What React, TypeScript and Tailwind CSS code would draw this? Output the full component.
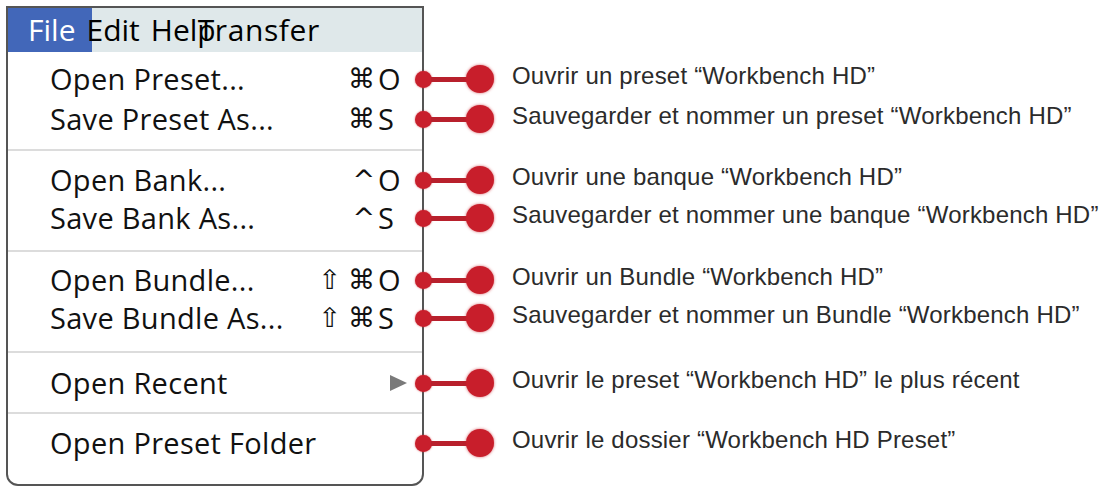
import React from "react";

type Row = { label: string; mod?: string[]; key?: string; arrow?: boolean; note: string };
type Group = { pt: string; pb: string; rowH: string; rows: Row[] };

const groups: Group[] = [
  {
    pt: "pt-[7px]",
    pb: "pb-[10px]",
    rowH: "h-[40px]",
    rows: [
      { label: "Open Preset...", mod: ["⌘"], key: "O", note: "Ouvrir un preset “Workbench HD”" },
      { label: "Save Preset As...", mod: ["⌘"], key: "S", note: "Sauvegarder et nommer un preset “Workbench HD”" },
    ],
  },
  {
    pt: "pt-[10px]",
    pb: "pb-[13px]",
    rowH: "h-[38px]",
    rows: [
      { label: "Open Bank...", mod: ["^"], key: "O", note: "Ouvrir une banque “Workbench HD”" },
      { label: "Save Bank As...", mod: ["^"], key: "S", note: "Sauvegarder et nommer une banque “Workbench HD”" },
    ],
  },
  {
    pt: "pt-[9px]",
    pb: "pb-[14px]",
    rowH: "h-[38px]",
    rows: [
      { label: "Open Bundle...", mod: ["⇧", "⌘"], key: "O", note: "Ouvrir un Bundle “Workbench HD”" },
      { label: "Save Bundle As...", mod: ["⇧", "⌘"], key: "S", note: "Sauvegarder et nommer un Bundle “Workbench HD”" },
    ],
  },
  {
    pt: "pt-[10px]",
    pb: "pb-[9px]",
    rowH: "h-[40px]",
    rows: [{ label: "Open Recent", arrow: true, note: "Ouvrir le preset “Workbench HD” le plus récent" }],
  },
  {
    pt: "pt-[9px]",
    pb: "pb-[0px]",
    rowH: "h-[40px]",
    rows: [{ label: "Open Preset Folder", note: "Ouvrir le dossier “Workbench HD Preset”" }],
  },
];

const menuFont = { fontFamily: '"Open Sans", "DejaVu Sans", sans-serif' };
const symFont = { fontFamily: '"DejaVu Sans", sans-serif' };

function Separator() {
  return <div className="h-[2px] bg-[#dcdcdc]" />;
}

function Menu() {
  return (
    <div
      className="w-[418px] h-[480px] border-2 border-[#555] rounded-b-[12px] bg-white flex flex-col text-[#111] shrink-0"
      style={menuFont}
    >
      <div className="h-[44px] bg-[#dfe8ea] flex items-center text-[30px] leading-none text-black whitespace-nowrap">
        <div className="h-full flex items-center bg-[#4267b9] text-white pl-[20px] pr-[17px]">File</div>
        <span className="-ml-[6px]">Edit</span>
        <span className="ml-[11px]">Help</span>
        <span className="-ml-[18px] tracking-[0.6px]">Transfer</span>
      </div>
      {groups.map((g, gi) => (
        <React.Fragment key={gi}>
          {gi > 0 && <Separator />}
          <div className={`${g.pt} ${g.pb} flex flex-col`}>
            {g.rows.map((r, ri) => (
              <div key={ri} className={`${g.rowH} flex items-center text-[29px] whitespace-nowrap`}>
                <span className="pl-[42px] flex-1 tracking-[0.3px]">{r.label}</span>
                {r.key && (
                  <span className="flex items-center pr-[16px]">
                    <span className="flex items-center justify-end gap-[7px] mr-[3px] text-[27px]" style={symFont}>
                      {r.mod!.map((m, mi) => (
                        <span key={mi}>{m}</span>
                      ))}
                    </span>
                    <span className="w-[28px] text-left">{r.key}</span>
                  </span>
                )}
                {r.arrow && (
                  <span className="pr-[15px] flex items-center">
                    <svg width="17" height="16" viewBox="0 0 17 16">
                      <polygon points="0,0 17,8 0,16" fill="#7a7a7a" />
                    </svg>
                  </span>
                )}
              </div>
            ))}
          </div>
        </React.Fragment>
      ))}
    </div>
  );
}

function Note({ text, h }: { text: string; h: string }) {
  return (
    <div className={`${h} flex items-center`}>
      <div className="w-[17px] h-[17px] rounded-full bg-[#c81f2c] shadow-[0_0_2px_rgba(200,30,40,0.7)] shrink-0" />
      <div className="w-[36px] h-[5px] bg-[#b8202c] -mx-[1px] shrink-0" />
      <div className="w-[28px] h-[28px] rounded-full bg-[#c81e2b] shadow-[0_0_3px_rgba(200,30,40,0.7)] shrink-0" />
      <span
        className="ml-[18px] pb-[7px] text-[24px] leading-none text-[#2b2b2b] tracking-[0.2px] whitespace-nowrap"
        style={{ fontFamily: '"Liberation Sans", Arial, sans-serif' }}
      >
        {text}
      </span>
    </div>
  );
}

function Notes() {
  return (
    <div className="-ml-[9px] flex flex-col">
      <div className="h-[46px]" />
      {groups.map((g, gi) => (
        <React.Fragment key={gi}>
          {gi > 0 && <div className="h-[2px]" />}
          <div className={`${g.pt} ${g.pb} flex flex-col`}>
            {g.rows.map((r, ri) => (
              <Note key={ri} text={r.note} h={g.rowH} />
            ))}
          </div>
        </React.Fragment>
      ))}
    </div>
  );
}

export default function App() {
  return (
    <div className="w-[1117px] h-[490px] bg-white overflow-hidden">
      <div className="flex pt-[6px] pl-[6px]">
        <Menu />
        <Notes />
      </div>
    </div>
  );
}
